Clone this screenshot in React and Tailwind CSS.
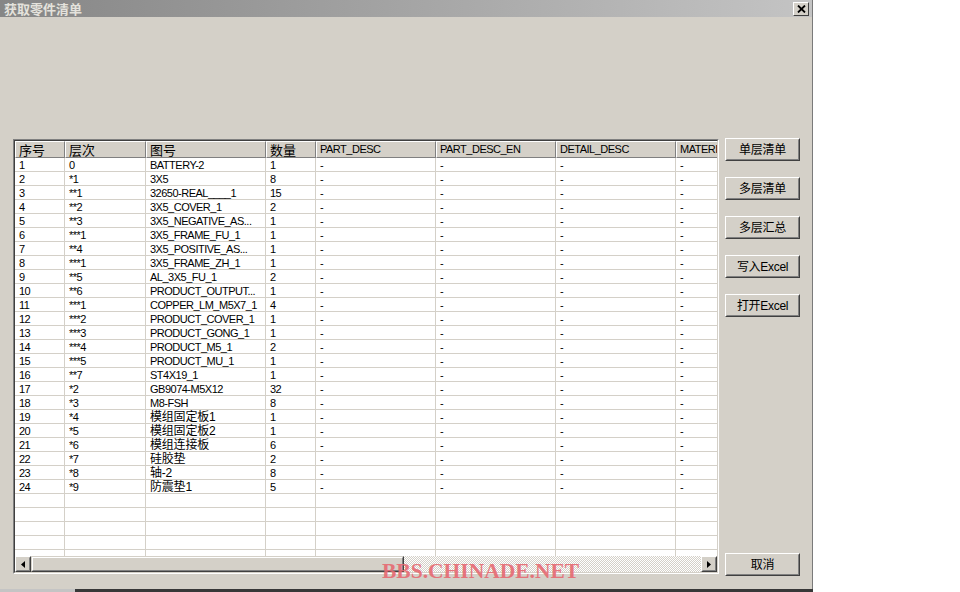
import React from "react";

const rows = [
  ["1", "0", "BATTERY-2", "1"],
  ["2", "*1", "3X5", "8"],
  ["3", "**1", "32650-REAL____1", "15"],
  ["4", "**2", "3X5_COVER_1", "2"],
  ["5", "**3", "3X5_NEGATIVE_AS...", "1"],
  ["6", "***1", "3X5_FRAME_FU_1", "1"],
  ["7", "**4", "3X5_POSITIVE_AS...", "1"],
  ["8", "***1", "3X5_FRAME_ZH_1", "1"],
  ["9", "**5", "AL_3X5_FU_1", "2"],
  ["10", "**6", "PRODUCT_OUTPUT...", "1"],
  ["11", "***1", "COPPER_LM_M5X7_1", "4"],
  ["12", "***2", "PRODUCT_COVER_1", "1"],
  ["13", "***3", "PRODUCT_GONG_1", "1"],
  ["14", "***4", "PRODUCT_M5_1", "2"],
  ["15", "***5", "PRODUCT_MU_1", "1"],
  ["16", "**7", "ST4X19_1", "1"],
  ["17", "*2", "GB9074-M5X12", "32"],
  ["18", "*3", "M8-FSH", "8"],
  ["19", "*4", "模组固定板1", "1"],
  ["20", "*5", "模组固定板2", "1"],
  ["21", "*6", "模组连接板", "6"],
  ["22", "*7", "硅胶垫", "2"],
  ["23", "*8", "轴-2", "8"],
  ["24", "*9", "防震垫1", "5"],
];

const headers = ["序号", "层次", "图号", "数量", "PART_DESC", "PART_DESC_EN", "DETAIL_DESC", "MATERIAL"];

const cjk = /[\u4e00-\u9fff]/;

function Cell({ text }) {
  const isCjk = cjk.test(text);
  return (
    <div className="h-[14px] border-r border-b border-[#d4d0c8] pl-[4px] overflow-hidden whitespace-nowrap">
      {isCjk ? (
        <span className="block pt-[1px] text-[12px] leading-[12px] font-['Liberation_Sans','Noto_Sans_CJK_SC',sans-serif] tracking-[-0.2px] text-black">
          {text}
        </span>
      ) : (
        <span className="block pt-[2px] text-[11px] leading-[11px] font-['Liberation_Sans',sans-serif] tracking-[-0.5px] text-black">
          {text}
        </span>
      )}
    </div>
  );
}

function HeaderCell({ text }) {
  const isCjk = cjk.test(text);
  return (
    <div className="h-[17px] border-t border-l border-white border-r-[#808080] border-b-[#808080] border-r border-b bg-[#d4d0c8] pl-[3px] overflow-hidden whitespace-nowrap flex items-center">
      {isCjk ? (
        <span className="text-[13px] leading-[15px] font-['Noto_Sans_CJK_SC',sans-serif] text-black">{text}</span>
      ) : (
        <span className="text-[11px] leading-[15px] font-['Liberation_Sans',sans-serif] tracking-[-0.5px] text-black">{text}</span>
      )}
    </div>
  );
}

function Btn({ children }) {
  return (
    <div className="w-[75px] h-[23px] border border-t-white border-l-white border-b-[#404040] border-r-[#404040] bg-[#d4d0c8]">
      <div className="w-full h-full border border-t-[#d4d0c8] border-l-[#d4d0c8] border-b-[#808080] border-r-[#808080] flex items-center justify-center">
        <span className="text-[12px] leading-[14px] font-['Liberation_Sans','Noto_Sans_CJK_SC',sans-serif] tracking-[-0.3px] text-black">
          {children}
        </span>
      </div>
    </div>
  );
}

function ScrollBtn({ dir }) {
  return (
    <div className="w-[16px] h-[16px] shrink-0 border border-t-white border-l-white border-b-[#404040] border-r-[#404040] bg-[#d4d0c8]">
      <div className="w-full h-full border border-t-[#d4d0c8] border-l-[#d4d0c8] border-b-[#808080] border-r-[#808080] flex items-center justify-center">
        <svg width="4" height="7" viewBox="0 0 4 7">
          {dir === "left" ? <path d="M4 0 L0 3.5 L4 7 Z" fill="#000" /> : <path d="M0 0 L4 3.5 L0 7 Z" fill="#000" />}
        </svg>
      </div>
    </div>
  );
}

export default function App() {
  const blank = Array.from({ length: 5 }, () => ["", "", "", ""]);
  const all = [...rows, ...blank];
  return (
    <div className="w-[960px] h-[592px] bg-white flex flex-col overflow-hidden relative">
      <div className="w-[813px] h-[589px] bg-[#d4d0c8] border-r border-[#7a7a7a] flex flex-col">
        {/* Title bar */}
        <div className="h-[17px] bg-linear-to-r from-[#868686] to-[#c4c4c4] flex items-center justify-between pl-[4px] pr-[3px]">
          <span className="text-[13px] leading-[15px] font-bold font-['Noto_Sans_CJK_SC',sans-serif] text-[#e4e2dc]">
            获取零件清单
          </span>
          <div className="w-[16px] h-[14px] border border-t-white border-l-white border-b-[#404040] border-r-[#404040] bg-[#d4d0c8] flex items-center justify-center">
            <svg width="9" height="8" viewBox="0 0 9 8">
              <path d="M1 0.5 L8 7.5 M8 0.5 L1 7.5" stroke="#000" strokeWidth="1.8" />
            </svg>
          </div>
        </div>

        {/* Body */}
        <div className="flex items-start pl-[13px] pt-[121px]">
          {/* Table frame */}
          <div className="mt-[1px] w-[706px] h-[435px] border border-t-[#808080] border-l-[#808080] border-b-white border-r-white">
            <div className="w-full h-full border border-t-[#404040] border-l-[#404040] border-b-[#d4d0c8] border-r-[#d4d0c8] bg-white flex flex-col overflow-hidden">
              <div className="overflow-hidden">
                <div className="grid grid-cols-[50px_81px_120px_50px_120px_120px_120px_120px] w-max">
                  {headers.map((h, i) => (
                    <HeaderCell key={i} text={h} />
                  ))}
                </div>
              </div>
              <div className="h-[398px] overflow-hidden">
                <div className="grid grid-cols-[50px_81px_120px_50px_120px_120px_120px_120px] w-max">
                  {all.map((r, ri) => {
                    const dash = r[0] ? "-" : "";
                    const cells = [...r, dash, dash, dash, dash];
                    return cells.map((c, ci) => <Cell key={ri + "-" + ci} text={c} />);
                  })}
                </div>
              </div>
              {/* Horizontal scrollbar */}
              <div className="h-[16px] flex">
                <ScrollBtn dir="left" />
                <div className="w-[373px] h-[16px] shrink-0 border border-t-[#d4d0c8] border-l-[#d4d0c8] border-b-[#404040] border-r-[#404040] bg-[#d4d0c8]">
                  <div className="w-full h-full border border-t-white border-l-white border-b-[#808080] border-r-[#808080]" />
                </div>
                <div className="flex-1 h-[16px] bg-[image:repeating-conic-gradient(#d4d0c8_0%_25%,#ffffff_0%_50%)] bg-[length:2px_2px]" />
                <ScrollBtn dir="right" />
              </div>
            </div>
          </div>

          {/* Buttons */}
          <div className="ml-[6px] h-[438px] flex flex-col justify-between">
            <div className="flex flex-col gap-[16px]">
              <Btn>单层清单</Btn>
              <Btn>多层清单</Btn>
              <Btn>多层汇总</Btn>
              <Btn>写入Excel</Btn>
              <Btn>打开Excel</Btn>
            </div>
            <Btn>取消</Btn>
          </div>
        </div>
      </div>

      {/* bottom strip */}
      <div className="h-[3px] flex">
        <div className="w-[75px] bg-[#c4c4c4]" />
        <div className="w-[738px] bg-[#383838]" />
        <div className="flex-1 bg-white" />
      </div>

      {/* watermark */}
      <div className="absolute left-[382px] top-[558px] text-[21.5px] leading-[26px] font-bold font-['Liberation_Serif',serif] text-[#e66a72] opacity-90 pointer-events-none">
        BBS.CHINADE.NET
      </div>
    </div>
  );
}
